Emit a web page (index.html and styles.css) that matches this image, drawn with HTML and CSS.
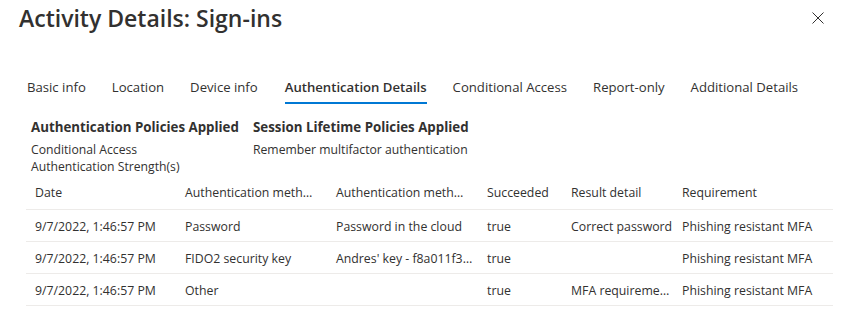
FILE: index.html
```html
<!DOCTYPE html>
<html>
<head>
<meta charset="utf-8">
<link rel="stylesheet" href="styles.css">
</head>
<body>
<div class="panel">
  <div class="header">
    <h1 class="title">Activity Details: Sign-ins</h1>
    <button class="close" aria-label="Close">
      <svg width="12" height="12" viewBox="0 0 12 12"><path d="M0.5 0.5 L11.5 11.5 M11.5 0.5 L0.5 11.5" stroke="#323130" stroke-width="1" fill="none"/></svg>
    </button>
  </div>
  <div class="tabs">
    <div class="tab">Basic info</div>
    <div class="tab">Location</div>
    <div class="tab">Device info</div>
    <div class="tab active">Authentication Details</div>
    <div class="tab">Conditional Access</div>
    <div class="tab">Report-only</div>
    <div class="tab">Additional Details</div>
  </div>
  <div class="policies">
    <div class="policy p1">
      <div class="ph">Authentication Policies Applied</div>
      <div class="pv">Conditional Access<br>Authentication Strength(s)</div>
    </div>
    <div class="policy">
      <div class="ph">Session Lifetime Policies Applied</div>
      <div class="pv">Remember multifactor authentication</div>
    </div>
  </div>
  <table class="grid">
    <colgroup>
      <col class="c1"><col class="c2"><col class="c3"><col class="c4"><col class="c5"><col class="c6">
    </colgroup>
    <thead>
      <tr><th>Date</th><th>Authentication meth…</th><th>Authentication meth…</th><th>Succeeded</th><th>Result detail</th><th>Requirement</th></tr>
    </thead>
    <tbody>
      <tr><td>9/7/2022, 1:46:57 PM</td><td>Password</td><td>Password in the cloud</td><td>true</td><td>Correct password</td><td>Phishing resistant MFA</td></tr>
      <tr><td>9/7/2022, 1:46:57 PM</td><td>FIDO2 security key</td><td>Andres' key - f8a011f3…</td><td>true</td><td></td><td>Phishing resistant MFA</td></tr>
      <tr><td>9/7/2022, 1:46:57 PM</td><td>Other</td><td></td><td>true</td><td>MFA requireme…</td><td>Phishing resistant MFA</td></tr>
    </tbody>
  </table>
</div>
</body>
</html>
```
FILE: styles.css
```css
* { box-sizing: border-box; }
html, body { margin: 0; padding: 0; background: #ffffff; }
body {
  font-family: "Open Sans", "Liberation Sans", sans-serif;
  color: #323130;
  font-size: 12px;
}
.panel { width: 853px; height: 316px; overflow: hidden; }
.header {
  display: flex;
  justify-content: space-between;
  align-items: flex-start;
  padding: 2px 29px 0 19px;
}
.title {
  margin: 0;
  font-size: 23px;
  font-weight: 600;
  line-height: 32px;
  color: #323130;
}
.close {
  border: 0;
  background: none;
  padding: 0;
  margin-top: 10px;
  width: 12px;
  height: 12px;
  display: block;
}
.close svg { display: block; }
.tabs {
  display: flex;
  gap: 26px;
  margin: 43px 0 0 27px;
  height: 27px;
}
.tab {
  font-size: 13.15px;
  line-height: 18px;
  padding-top: 1px;
  white-space: nowrap;
  height: 27px;
}
.tab.active {
  font-weight: 600;
  margin-left: 1px;
  border-bottom: 2px solid #0078d4;
}
.policies {
  display: flex;
  margin: 14px 0 0 31px;
}
.policy.p1 { width: 222px; }
.ph {
  font-weight: 700;
  font-size: 13.3px;
  line-height: 18px;
}
.pv {
  margin-top: 5px;
  font-size: 12.2px;
  line-height: 17px;
}
.grid {
  margin: 0 0 0 26px;
  width: 807px;
  border-collapse: collapse;
  table-layout: fixed;
}
.c1 { width: 150px; }
.c2 { width: 151px; }
.c3 { width: 151px; }
.c4 { width: 84px; }
.c5 { width: 111px; }
.c6 { width: 160px; }
.grid th, .grid td {
  text-align: left;
  font-weight: 400;
  font-size: 12.3px;
  padding: 2px 0 0 9px;
  white-space: nowrap;
  overflow: hidden;
}
.grid th {
  height: 34px;
  border-bottom: 1px solid #edebe9;
}
.grid td {
  height: 32px;
  border-bottom: 1px solid #edebe9;
}
```
